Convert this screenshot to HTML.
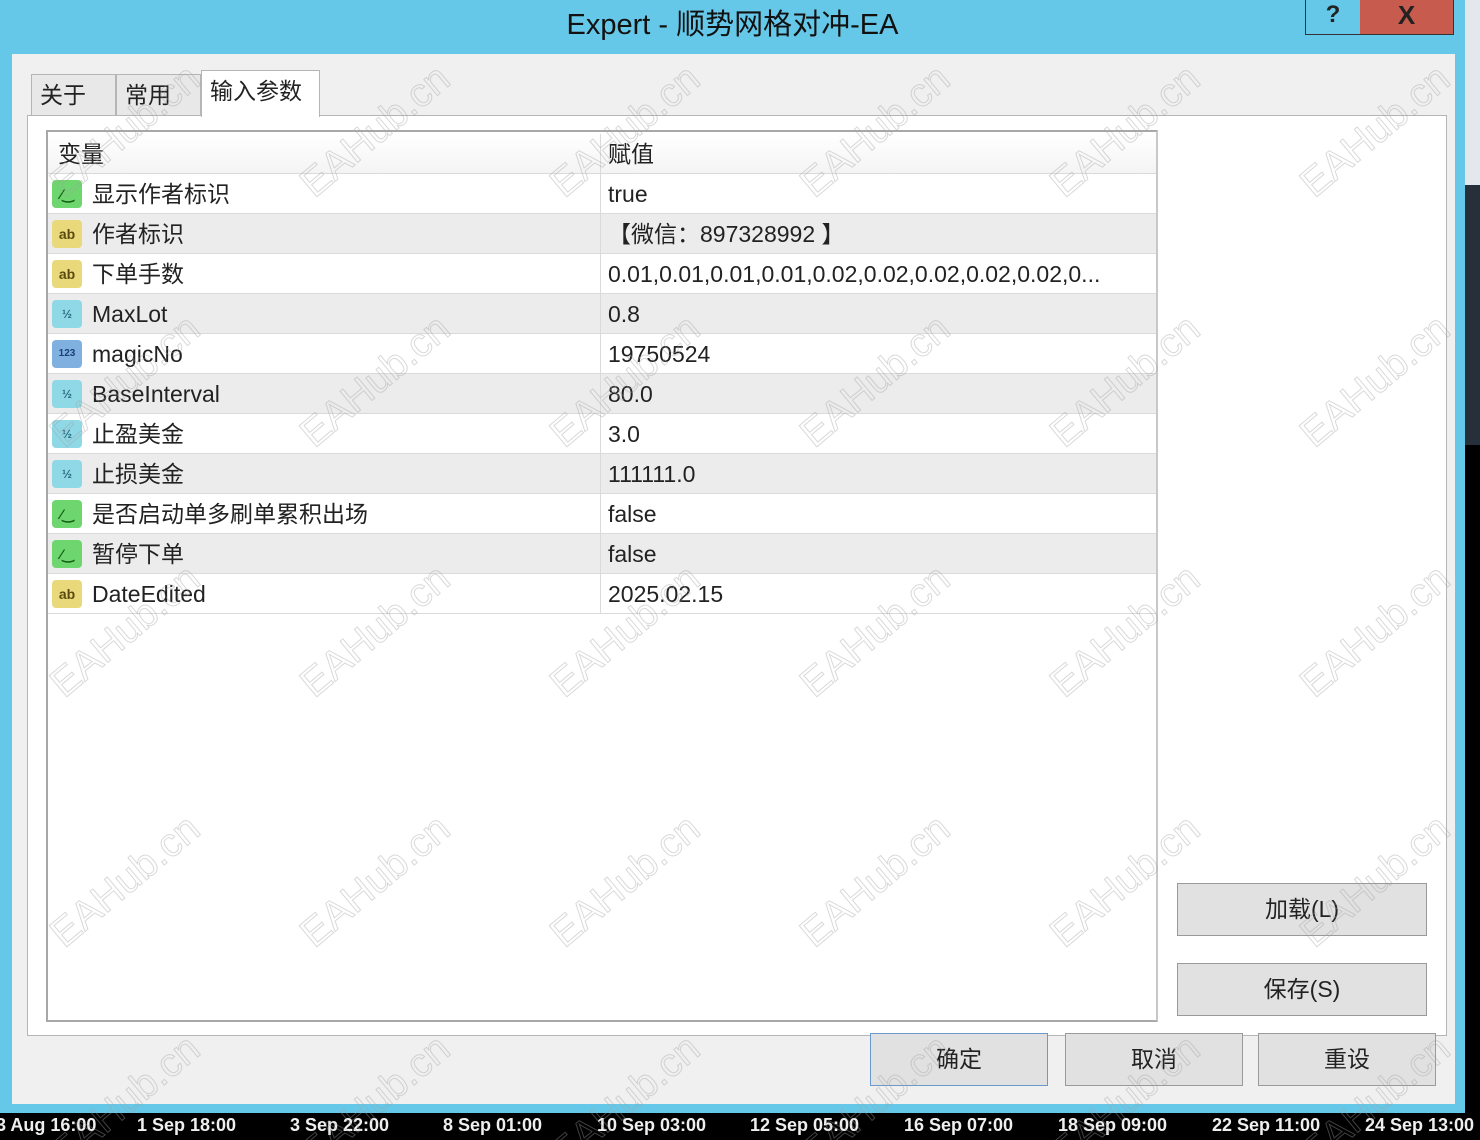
<!DOCTYPE html>
<html><head><meta charset="utf-8"><style>
*{margin:0;padding:0;box-sizing:border-box}
html,body{width:1480px;height:1140px;overflow:hidden}
body{position:relative;background:#000;font-family:"Liberation Sans","Noto Sans CJK SC",sans-serif;color:#222}
.abs{position:absolute}
#frame{left:0;top:0;width:1465px;height:1113px;background:#66c8e8}
#title{left:0;top:8px;width:1465px;text-align:center;font-size:29px;line-height:34px;color:#111}
#help{left:1305px;top:0;width:56px;height:35px;border:1px solid #333;border-top:none;background:#66c8e8;text-align:center;font:bold 24px "Liberation Sans";line-height:30px}
#close{left:1360px;top:0;width:94px;height:35px;border:1px solid #333;border-top:none;border-left:none;background:#c75b4e;text-align:center;font:bold 26px "Liberation Sans";line-height:30px}
#content{left:12px;top:54px;width:1443px;height:1050px;background:#f0f0f0}
.tab{top:74px;height:42px;border:1px solid #b5b5b5;border-bottom:none;background:#e8e8e8;font-size:23px;line-height:28px;padding:6px 8px}
#panel{left:27px;top:115px;width:1420px;height:921px;border:1px solid #b5b5b5;background:#fff}
#table{left:46px;top:130px;width:1112px;height:892px;border:2px solid #a8a8a8;border-right-color:#c8c8c8;background:#fff}
.row{left:48px;width:1108px;height:40px;border-bottom:1px solid #dadada;font-size:23px}
.row .n{position:absolute;display:block;left:44px;top:6px;line-height:28px;height:28px}
.row .v{position:absolute;display:block;left:560px;top:6px;line-height:28px;height:28px;white-space:nowrap}
.row .sep{position:absolute;left:552px;top:0;width:1px;height:40px;background:#dadada}
.ic{position:absolute;display:block;left:4px;top:6px;width:30px;height:28px;border-radius:4px;font:bold 14px "Liberation Sans";text-align:center;line-height:28px}
.g{background:#6ed66e;color:#145c14}.y{background:#e9d97a;color:#5a4a10}.c{background:#8fd8e6;color:#2a6a80;font-size:12px}.b{background:#7fb0e0;color:#1c3f78;font-size:10px}
.btn{height:53px;border:1px solid #9a9a9a;background:#e1e1e1;font-size:23px;text-align:center;line-height:50px}
.wm{position:absolute;font:40px "Liberation Sans";line-height:46px;color:transparent;-webkit-text-stroke:1px rgba(160,160,160,.4);transform:rotate(-40deg);white-space:nowrap}
#bar{left:0;top:1113px;width:1480px;height:27px;background:#000;color:#eee;font-size:18px;font-weight:bold;line-height:22px;overflow:hidden;white-space:nowrap}
#bar span{position:absolute;top:1px}
#wms{position:absolute;left:0;top:0;width:1480px;height:1140px;overflow:hidden}
</style></head><body>
<div class="abs" id="frame"></div>
<div class="abs" style="left:1465px;top:0;width:15px;height:185px;background:#e4e8ec"></div>
<div class="abs" style="left:1465px;top:185px;width:15px;height:260px;background:#26303a"></div>
<div class="abs" id="title">Expert - 顺势网格对冲-EA</div>
<div class="abs" id="help">?</div>
<div class="abs" id="close">X</div>
<div class="abs" id="content"></div>
<div class="abs tab" style="left:31px;width:85px">关于</div>
<div class="abs tab" style="left:116px;width:85px">常用</div>
<div class="abs" id="panel"></div>
<div class="abs tab" style="left:201px;top:70px;width:119px;height:47px;background:#fff;z-index:2">输入参数</div>
<div class="abs" id="table"></div>
<div class="abs row" style="top:134px;background:linear-gradient(#fff,#f4f4f4)"><span class="n" style="left:10px">变量</span><span class="v">赋值</span><span class="sep"></span></div>
<div class="abs row" style="top:174px"><span class="ic g">⁄‿</span><span class="n">显示作者标识</span><span class="sep"></span><span class="v">true</span></div>
<div class="abs row" style="top:214px;background:#ececec"><span class="ic y">ab</span><span class="n">作者标识</span><span class="sep"></span><span class="v">【微信：897328992 】</span></div>
<div class="abs row" style="top:254px"><span class="ic y">ab</span><span class="n">下单手数</span><span class="sep"></span><span class="v">0.01,0.01,0.01,0.01,0.02,0.02,0.02,0.02,0.02,0...</span></div>
<div class="abs row" style="top:294px;background:#ececec"><span class="ic c">½</span><span class="n">MaxLot</span><span class="sep"></span><span class="v">0.8</span></div>
<div class="abs row" style="top:334px"><span class="ic b">123</span><span class="n">magicNo</span><span class="sep"></span><span class="v">19750524</span></div>
<div class="abs row" style="top:374px;background:#ececec"><span class="ic c">½</span><span class="n">BaseInterval</span><span class="sep"></span><span class="v">80.0</span></div>
<div class="abs row" style="top:414px"><span class="ic c">½</span><span class="n">止盈美金</span><span class="sep"></span><span class="v">3.0</span></div>
<div class="abs row" style="top:454px;background:#ececec"><span class="ic c">½</span><span class="n">止损美金</span><span class="sep"></span><span class="v">111111.0</span></div>
<div class="abs row" style="top:494px"><span class="ic g">⁄‿</span><span class="n">是否启动单多刷单累积出场</span><span class="sep"></span><span class="v">false</span></div>
<div class="abs row" style="top:534px;background:#ececec"><span class="ic g">⁄‿</span><span class="n">暂停下单</span><span class="sep"></span><span class="v">false</span></div>
<div class="abs row" style="top:574px"><span class="ic y">ab</span><span class="n">DateEdited</span><span class="sep"></span><span class="v">2025.02.15</span></div>
<div class="abs btn" style="left:1177px;top:883px;width:250px">加载(L)</div>
<div class="abs btn" style="left:1177px;top:963px;width:250px">保存(S)</div>
<div class="abs btn" style="left:870px;top:1033px;width:178px;border-color:#6a9acc">确定</div>
<div class="abs btn" style="left:1065px;top:1033px;width:178px">取消</div>
<div class="abs btn" style="left:1258px;top:1033px;width:178px">重设</div>
<div class="abs" id="bar">
<span style="left:-4px">3 Aug 16:00</span><span style="left:137px">1 Sep 18:00</span><span style="left:290px">3 Sep 22:00</span><span style="left:443px">8 Sep 01:00</span><span style="left:597px">10 Sep 03:00</span><span style="left:750px">12 Sep 05:00</span><span style="left:904px">16 Sep 07:00</span><span style="left:1058px">18 Sep 09:00</span><span style="left:1212px">22 Sep 11:00</span><span style="left:1365px">24 Sep 13:00</span>
</div>
<div id="wms"></div>
<script>
var h='';
[[125,130],[125,380],[125,630],[125,880],[125,1100]].forEach(function(r){
for(var i=0;i<6;i++){var cx=r[0]+250*i,cy=r[1];h+='<div class="wm" style="left:'+(cx-90)+'px;top:'+(cy-22)+'px">EAHub.cn</div>';}
});
document.getElementById('wms').innerHTML=h;
</script>
</body></html>
